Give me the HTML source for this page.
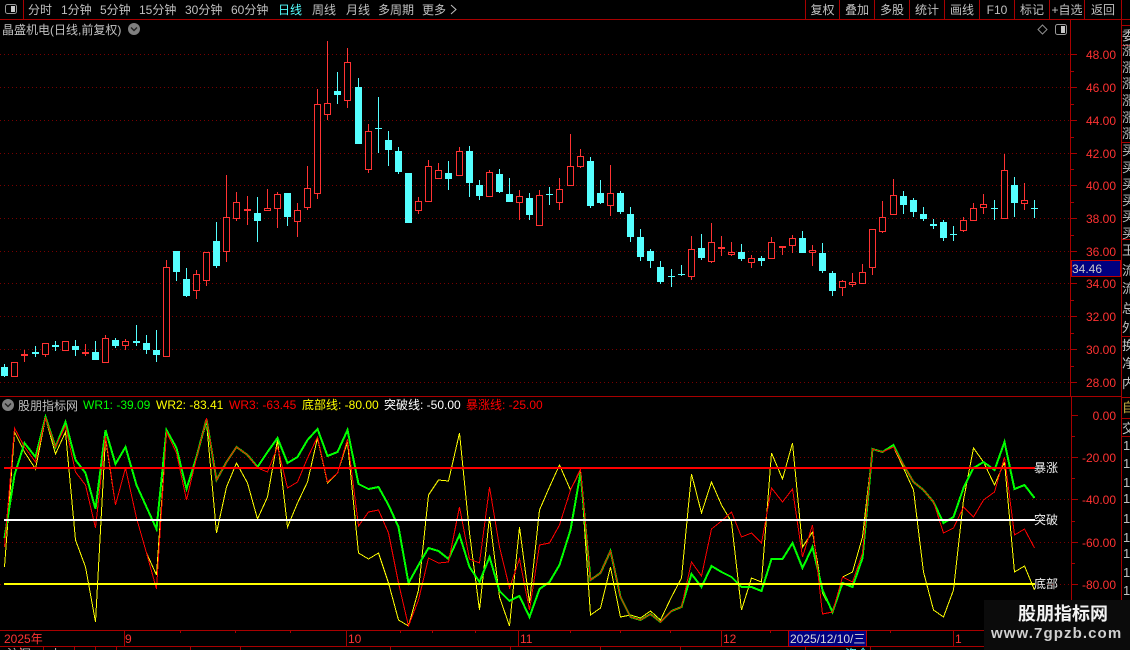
<!DOCTYPE html>
<html lang="zh-CN"><head><meta charset="utf-8"><title>晶盛机电</title>
<style>
html,body{margin:0;padding:0;background:#000;width:1130px;height:650px;overflow:hidden}
svg{display:block}
text{font-family:"Liberation Sans","WenQuanYi Zen Hei","Noto Sans CJK SC",sans-serif;font-size:12px}
.n{fill:#c0c0c0}.p{fill:#ff3232;text-anchor:end}.c{fill:#c0c0c0;text-anchor:middle}
.l{fill:none;shape-rendering:crispEdges}
.s{fill:#c0c0c0;font-size:13px}
</style></head><body>
<svg xmlns="http://www.w3.org/2000/svg" width="1130" height="650" viewBox="0 0 1130 650">
<defs><clipPath id="rp"><rect x="1122" y="0" width="8" height="650"/></clipPath><clipPath id="bt"><rect x="0" y="647" width="984" height="3"/></clipPath></defs>
<rect width="1130" height="650" fill="#000"/>

<!-- frame lines -->
<path class="l" stroke="#a80000" d="M0 19.5H1130M23.5 0V19M805.5 0V19M839.5 0V19M874.5 0V19M909.5 0V19M944.5 0V19M979.5 0V19M1014.5 0V19M1049.5 0V19M1084.5 0V19M1121.5 0V630M1070.5 19V396M1071.5 396V630M0 396.5H1121M0 630.5H1071M0 646.5H984M1122 25.5H1130M1122 45.5H1130M1122 142.5H1130M1122 239.5H1130M1122 336.5H1130M1122 397.5H1130M1122 418.5H1130M1122 436.5H1130"/>

<!-- top toolbar -->
<rect x="5.5" y="4.5" width="11" height="9" rx="2" fill="#000" stroke="#999"/><rect x="11" y="6" width="4" height="6" fill="#c8c8c8"/>
<text class="n" x="28" y="14">分时</text><text class="n" x="61" y="14">1分钟</text><text class="n" x="100" y="14">5分钟</text><text class="n" x="139" y="14">15分钟</text><text class="n" x="185" y="14">30分钟</text><text class="n" x="231" y="14">60分钟</text>
<text x="278" y="14" fill="#55ffff">日线</text><text class="n" x="312" y="14">周线</text><text class="n" x="346" y="14">月线</text><text class="n" x="378" y="14">多周期</text><text class="n" x="422" y="14">更多</text>
<path d="M451 5L456 9.5L451 14" fill="none" stroke="#c0c0c0"/>
<text class="c" x="822.5" y="14">复权</text><text class="c" x="857" y="14">叠加</text><text class="c" x="892" y="14">多股</text><text class="c" x="927" y="14">统计</text><text class="c" x="962" y="14">画线</text><text class="c" x="997" y="14">F10</text><text class="c" x="1032" y="14">标记</text><text class="c" x="1067" y="14">+自选</text><text class="c" x="1103" y="14">返回</text>

<!-- title row -->
<text class="n" x="2" y="34">晶盛机电(日线,前复权)</text>
<circle cx="134" cy="29" r="6" fill="#808080"/><path d="M131 27.5L134 30.5L137 27.5" fill="none" stroke="#222" stroke-width="1.4"/>
<path d="M1042.5 25L1047 29.5L1042.5 34L1038 29.5Z" fill="none" stroke="#909090"/>
<rect x="1055.5" y="24.5" width="11" height="10" rx="2" fill="#000" stroke="#999"/><rect x="1061" y="26" width="4" height="7" fill="#c8c8c8"/>

<!-- main grid -->
<path class="l" stroke="#780000" stroke-dasharray="1 3" d="M0 54.5H1070M0 87.5H1070M0 120.5H1070M0 153.5H1070M0 185.5H1070M0 218.5H1070M0 251.5H1070M0 283.5H1070M0 316.5H1070M0 349.5H1070M0 382.5H1070"/>
<!-- main axis ticks -->
<path class="l" stroke="#a80000" d="M1071 54.5H1077M1071 71.5H1074M1071 87.5H1077M1071 104.5H1074M1071 120.5H1077M1071 137.5H1074M1071 153.5H1077M1071 169.5H1074M1071 185.5H1077M1071 202.5H1074M1071 218.5H1077M1071 235.5H1074M1071 251.5H1077M1071 283.5H1077M1071 300.5H1074M1071 316.5H1077M1071 333.5H1074M1071 349.5H1077M1071 366.5H1074M1071 382.5H1077"/>
<text class="p" x="1116" y="59">48.00</text><text class="p" x="1116" y="92">46.00</text><text class="p" x="1116" y="125">44.00</text><text class="p" x="1116" y="158">42.00</text><text class="p" x="1116" y="190">40.00</text><text class="p" x="1116" y="223">38.00</text><text class="p" x="1116" y="256">36.00</text><text class="p" x="1116" y="288">34.00</text><text class="p" x="1116" y="321">32.00</text><text class="p" x="1116" y="354">30.00</text><text class="p" x="1116" y="387">28.00</text>
<rect x="1071.5" y="260.5" width="49" height="16" fill="#000080" stroke="#c00000"/><text x="1072" y="273" fill="#c8c8c8">34.46</text>

<!-- red candles: wicks -->
<path class="l" stroke="#ff3232" d="M24.5 350V362M45.5 343V357M85.5 344V356M105.5 335V362M125.5 339V350M166.5 260V356M196.5 270V299M206.5 252V286M226.5 175V262M236.5 192V221M247.5 196V225M267.5 189V210M277.5 192V228M297.5 203V237M307.5 166V210M317.5 89V199M327.5 41V120M347.5 48V108M368.5 124V173M418.5 197V214M428.5 160V201M438.5 163V178M459.5 147V175M489.5 170V196M519.5 190V220M539.5 190V225M559.5 178V210M570.5 134V185M580.5 149V168M610.5 165V216M691.5 236V280M711.5 223V263M721.5 236V256M731.5 242V256M751.5 255V268M771.5 237V258M782.5 246V255M792.5 235V253M812.5 245V266M842.5 280V296M852.5 273V287M862.5 264V283M872.5 229V275M882.5 201V233M893.5 179V215M963.5 217V232M973.5 203V220M983.5 194V214M1004.5 154V218M1024.5 183V210"/>
<!-- red candles: bodies -->
<path class="l" style="fill:#000" stroke="#ff3232" d="M11.5 362.5h6V376.5h-6zM21.5 354.5h6V355.5h-6zM42.5 343.5h6V354.5h-6zM62.5 341.5h6V350.5h-6zM82.5 352.5h6V353.5h-6zM102.5 338.5h6V362.5h-6zM122.5 341.5h6V345.5h-6zM163.5 267.5h6V356.5h-6zM193.5 274.5h6V290.5h-6zM203.5 252.5h6V280.5h-6zM223.5 217.5h6V251.5h-6zM233.5 202.5h6V218.5h-6zM244.5 209.5h6V210.5h-6zM264.5 208.5h6V210.5h-6zM274.5 194.5h6V208.5h-6zM294.5 210.5h6V221.5h-6zM304.5 188.5h6V207.5h-6zM314.5 104.5h6V193.5h-6zM324.5 103.5h6V114.5h-6zM344.5 62.5h6V100.5h-6zM365.5 131.5h6V169.5h-6zM415.5 201.5h6V210.5h-6zM425.5 166.5h6V201.5h-6zM435.5 170.5h6V178.5h-6zM456.5 151.5h6V175.5h-6zM486.5 172.5h6V196.5h-6zM516.5 196.5h6V202.5h-6zM536.5 195.5h6V225.5h-6zM556.5 189.5h6V202.5h-6zM567.5 166.5h6V185.5h-6zM577.5 156.5h6V166.5h-6zM607.5 193.5h6V205.5h-6zM688.5 249.5h6V276.5h-6zM708.5 242.5h6V261.5h-6zM718.5 247.5h6V248.5h-6zM728.5 252.5h6V254.5h-6zM748.5 258.5h6V262.5h-6zM768.5 242.5h6V258.5h-6zM779.5 246.5h6V247.5h-6zM789.5 238.5h6V245.5h-6zM809.5 250.5h6V252.5h-6zM839.5 281.5h6V287.5h-6zM849.5 282.5h6V284.5h-6zM859.5 272.5h6V283.5h-6zM869.5 229.5h6V267.5h-6zM879.5 217.5h6V231.5h-6zM890.5 195.5h6V214.5h-6zM960.5 220.5h6V230.5h-6zM970.5 208.5h6V220.5h-6zM980.5 204.5h6V207.5h-6zM1001.5 170.5h6V218.5h-6zM1021.5 200.5h6V203.5h-6z"/>
<!-- cyan candles: wicks -->
<path class="l" stroke="#55ffff" d="M4.5 364V377M35.5 346V357M55.5 341V351M75.5 340V356M95.5 341V360M115.5 338V348M136.5 325V346M146.5 335V354M156.5 330V362M176.5 251V281M186.5 268V297M216.5 222V268M257.5 197V242M287.5 193V226M337.5 72V104M358.5 78V144M378.5 97V153M388.5 131V166M398.5 147V174M448.5 161V190M469.5 146V197M479.5 180V200M499.5 169V193M509.5 178V202M529.5 193V220M549.5 187V205M590.5 157V208M600.5 180V204M620.5 191V214M630.5 207V242M640.5 229V261M650.5 249V268M660.5 261V284M671.5 269V287M681.5 265V276M701.5 234V260M741.5 244V261M761.5 256V266M802.5 231V253M822.5 243V273M832.5 271V296M903.5 191V214M913.5 198V217M923.5 207V221M933.5 219V229M943.5 220V241M953.5 226V241M994.5 200V220M1014.5 177V217M1034.5 200V218"/>
<!-- cyan candles: bodies -->
<path shape-rendering="crispEdges" fill="#55ffff" d="M1 367h7V376h-7zM32 352h7V354h-7zM52 345h7V347h-7zM72 346h7V350h-7zM92 352h7V360h-7zM112 340h7V346h-7zM133 341h7V343h-7zM143 343h7V350h-7zM153 350h7V355h-7zM173 251h7V272h-7zM183 279h7V296h-7zM213 241h7V266h-7zM254 213h7V221h-7zM284 193h7V217h-7zM334 91h7V95h-7zM355 87h7V144h-7zM375 128h7V129h-7zM385 140h7V150h-7zM395 151h7V172h-7zM405 173h7V223h-7zM445 173h7V179h-7zM466 151h7V183h-7zM476 185h7V196h-7zM496 174h7V192h-7zM506 194h7V202h-7zM526 198h7V215h-7zM546 194h7V195h-7zM587 161h7V206h-7zM597 193h7V203h-7zM617 193h7V212h-7zM627 214h7V237h-7zM637 237h7V257h-7zM647 251h7V261h-7zM657 267h7V282h-7zM668 276h7V277h-7zM678 274h7V275h-7zM698 248h7V258h-7zM738 252h7V259h-7zM758 258h7V261h-7zM799 238h7V253h-7zM819 253h7V271h-7zM829 273h7V291h-7zM900 196h7V205h-7zM910 200h7V212h-7zM920 214h7V219h-7zM930 224h7V226h-7zM940 222h7V238h-7zM950 234h7V235h-7zM991 208h7V209h-7zM1011 185h7V203h-7zM1031 208h7V209h-7z"/>

<!-- indicator header -->
<circle cx="8" cy="405" r="6" fill="#808080"/><path d="M5 403.5L8 406.5L11 403.5" fill="none" stroke="#222" stroke-width="1.4"/>
<text class="n" x="18" y="410">股朋指标网</text>
<text x="83" y="409" fill="#00ff00">WR1: -39.09</text>
<text x="156" y="409" fill="#ffff00">WR2: -83.41</text>
<text x="229" y="409" fill="#ff0000">WR3: -63.45</text>
<text x="302" y="409" fill="#ffff00">底部线: -80.00</text>
<text x="384" y="409" fill="#ffffff">突破线: -50.00</text>
<text x="466" y="409" fill="#ff0000">暴涨线: -25.00</text>

<!-- indicator grid -->
<path class="l" stroke="#780000" stroke-dasharray="1 3" d="M0 457.5H1070M0 499.5H1070M0 542.5H1070M0 584.5H1070"/>
<path class="l" stroke="#a80000" d="M1072 415.5H1078M1072 436.5H1075M1072 457.5H1078M1072 478.5H1075M1072 499.5H1078M1072 521.5H1075M1072 542.5H1078M1072 563.5H1075M1072 584.5H1078"/>
<text class="p" x="1116" y="420">0.00</text><text class="p" x="1116" y="462">-20.00</text><text class="p" x="1116" y="504">-40.00</text><text class="p" x="1116" y="547">-60.00</text><text class="p" x="1116" y="589">-80.00</text>

<!-- WR lines -->
<polyline class="l" stroke="#ffff00" points="4.5,567 14.5,432 24.5,452 35.5,469 45.5,418 55.5,454 65.5,432 75.5,540 85.5,567 95.5,622 105.5,438 115.5,505 125.5,468 136.5,518 146.5,553 156.5,575 166.5,432 176.5,453 186.5,500 196.5,458 206.5,422 216.5,533 226.5,487 236.5,463 247.5,483 257.5,519 267.5,497 277.5,440 287.5,527 297.5,503 307.5,482 317.5,438 327.5,483 337.5,473 347.5,442 358.5,553 368.5,559 378.5,553 388.5,583 398.5,620 408.5,626 418.5,590 428.5,495 438.5,480 448.5,481 459.5,433 469.5,533 479.5,610 489.5,517 499.5,597 509.5,626 519.5,527 529.5,603 539.5,510 549.5,487 559.5,465 570.5,490 580.5,470 590.5,615 600.5,608 610.5,567 620.5,617 630.5,615 640.5,618 650.5,611 660.5,620 671.5,597 681.5,578 691.5,474 701.5,513 711.5,482 721.5,505 731.5,522 741.5,610 751.5,578 761.5,582 771.5,453 782.5,479 792.5,443 802.5,547 812.5,532 822.5,593 832.5,612 842.5,577 852.5,572 862.5,537 872.5,449 882.5,452 893.5,447 903.5,468 913.5,490 923.5,572 933.5,610 943.5,617 953.5,590 963.5,500 973.5,448 983.5,462 994.5,485 1004.5,462 1014.5,572 1024.5,566 1034.5,590"/>
<polyline class="l" stroke="#00ff00" stroke-width="2" points="4.5,538 14.5,475 24.5,443 35.5,457 45.5,417 55.5,447 65.5,422 75.5,460 85.5,473 95.5,509 105.5,430 115.5,464 125.5,447 136.5,485 146.5,507 156.5,529 166.5,430 176.5,448 186.5,489 196.5,457 206.5,419 216.5,480 226.5,462 236.5,447 247.5,455 257.5,467 267.5,452 277.5,438 287.5,463 297.5,457 307.5,440 317.5,429 327.5,456 337.5,452 347.5,430 358.5,484 368.5,489 378.5,487 388.5,505 398.5,527 408.5,583 418.5,565 428.5,548 438.5,551 448.5,559 459.5,535 469.5,567 479.5,582 489.5,557 499.5,591 509.5,601 519.5,596 529.5,617 539.5,589 549.5,582 559.5,565 570.5,530 580.5,473 590.5,580 600.5,573 610.5,551 620.5,597 630.5,617 640.5,620 650.5,614 660.5,622 671.5,611 681.5,607 691.5,574 701.5,587 711.5,566 721.5,572 731.5,577 741.5,587 751.5,587 761.5,591 771.5,559 782.5,559 792.5,543 802.5,568 812.5,547 822.5,590 832.5,612 842.5,583 852.5,587 862.5,558 872.5,449 882.5,452 893.5,445 903.5,465 913.5,482 923.5,490 933.5,502 943.5,523 953.5,517 963.5,488 973.5,468 983.5,462 994.5,470 1004.5,442 1014.5,489 1024.5,485 1034.5,498"/>
<polyline class="l" stroke="#ff0000" points="4.5,547 14.5,428 24.5,447 35.5,462 45.5,418 55.5,447 65.5,426 75.5,472 85.5,485 95.5,528 105.5,436 115.5,505 125.5,468 136.5,518 146.5,553 156.5,589 166.5,432 176.5,453 186.5,500 196.5,458 206.5,418 216.5,480 226.5,462 236.5,447 247.5,455 257.5,468 267.5,472 277.5,447 287.5,488 297.5,482 307.5,458 317.5,437 327.5,482 337.5,473 347.5,439 358.5,526 368.5,512 378.5,510 388.5,533 398.5,583 408.5,626 418.5,600 428.5,558 438.5,563 448.5,562 459.5,507 469.5,559 479.5,563 489.5,487 499.5,547 509.5,588 519.5,559 529.5,610 539.5,545 549.5,543 559.5,525 570.5,490 580.5,469 590.5,580 600.5,573 610.5,551 620.5,597 630.5,617 640.5,620 650.5,614 660.5,622 671.5,611 681.5,607 691.5,562 701.5,576 711.5,529 721.5,521 731.5,512 741.5,537 751.5,533 761.5,543 771.5,488 782.5,502 792.5,489 802.5,557 812.5,525 822.5,614 832.5,612 842.5,577 852.5,582 862.5,553 872.5,449 882.5,452 893.5,447 903.5,465 913.5,482 923.5,490 933.5,502 943.5,533 953.5,528 963.5,507 973.5,517 983.5,500 994.5,492 1004.5,457 1014.5,535 1024.5,529 1034.5,548"/>
<path class="l" stroke="#ff0000" stroke-width="2" d="M4 468H1035"/>
<path class="l" stroke="#ffffff" stroke-width="2" d="M4 520H1035"/>
<path class="l" stroke="#ffff00" stroke-width="2" d="M4 584H1035"/>
<text x="1034" y="472" fill="#f0f0f0">暴涨</text><text x="1034" y="524" fill="#f0f0f0">突破</text><text x="1034" y="588" fill="#f0f0f0">底部</text>

<!-- date axis -->
<path class="l" stroke="#a80000" d="M124.5 630V646M346.5 630V646M518.5 630V646M721.5 630V646M953.5 630V646M180.5 630V633M235.5 630V633M290.5 630V633M400.5 630V633M432.5 630V633M475.5 630V633M570.5 630V633M620.5 630V633M670.5 630V633M770.5 630V633M890.5 630V633M20.5 647V650M43.5 647V650M74.5 647V650M95.5 647V650M116.5 647V650M190.5 647V650M240.5 647V650M390.5 647V650M510.5 647V650M600.5 647V650M680.5 647V650M805.5 647V650M870.5 647V650"/>
<text x="4" y="643" fill="#ff3232">2025年</text><text x="125" y="643" fill="#ff3232">9</text><text x="348" y="643" fill="#ff3232">10</text><text x="520" y="643" fill="#ff3232">11</text><text x="723" y="643" fill="#ff3232">12</text><text x="955" y="643" fill="#ff3232">1</text>
<rect x="788.5" y="630.5" width="78" height="16" fill="#000080" stroke="#c00000"/><text x="790" y="643" fill="#d8d8d8">2025/12/10/三</text>
<g clip-path="url(#bt)"><text class="n" x="7" y="658">沪深</text><text class="n" x="50" y="658">上</text><text x="845" y="658" fill="#55ffff">资金</text></g>

<!-- right clipped panel -->
<g clip-path="url(#rp)">
<text class="s" x="1122" y="40">委</text>
<text class="s" x="1122" y="55">涨</text><text class="s" x="1122" y="72">涨</text><text class="s" x="1122" y="88">涨</text><text class="s" x="1122" y="105">涨</text><text class="s" x="1122" y="122">涨</text><text class="s" x="1122" y="138">涨</text>
<text class="s" x="1122" y="155">买</text><text class="s" x="1122" y="172">买</text><text class="s" x="1122" y="189">买</text><text class="s" x="1122" y="205">买</text><text class="s" x="1122" y="221">买</text><text class="s" x="1122" y="238">买</text>
<text class="s" x="1122" y="255">玉</text><text class="s" x="1122" y="275">流</text><text class="s" x="1122" y="293">流</text><text class="s" x="1122" y="313">总</text><text class="s" x="1122" y="332">外</text>
<text class="s" x="1122" y="350">换</text><text class="s" x="1122" y="368">净</text><text class="s" x="1122" y="388">内</text>
<text x="1122" y="412" fill="#c8b040" style="font-size:13px">自</text><text class="s" x="1122" y="433">交</text>
<text class="s" x="1123" y="450">1</text><text class="s" x="1123" y="468">1</text><text class="s" x="1123" y="487">1</text><text class="s" x="1123" y="503">1</text><text class="s" x="1123" y="523">1</text><text class="s" x="1123" y="542">1</text><text class="s" x="1123" y="558">1</text><text class="s" x="1123" y="577">1</text><text class="s" x="1123" y="595">1</text>
</g>

<!-- watermark -->
<rect x="984" y="600" width="146" height="50" fill="#0b0b0b"/>
<text x="1018" y="620" fill="#f2f2f2" style="font-size:18px;font-weight:bold">股朋指标网</text>
<text x="991" y="638" fill="#d0d0d0" style="font-size:15px;font-weight:bold;letter-spacing:1.1px">www.7gpzb.com</text>
</svg>
</body></html>
